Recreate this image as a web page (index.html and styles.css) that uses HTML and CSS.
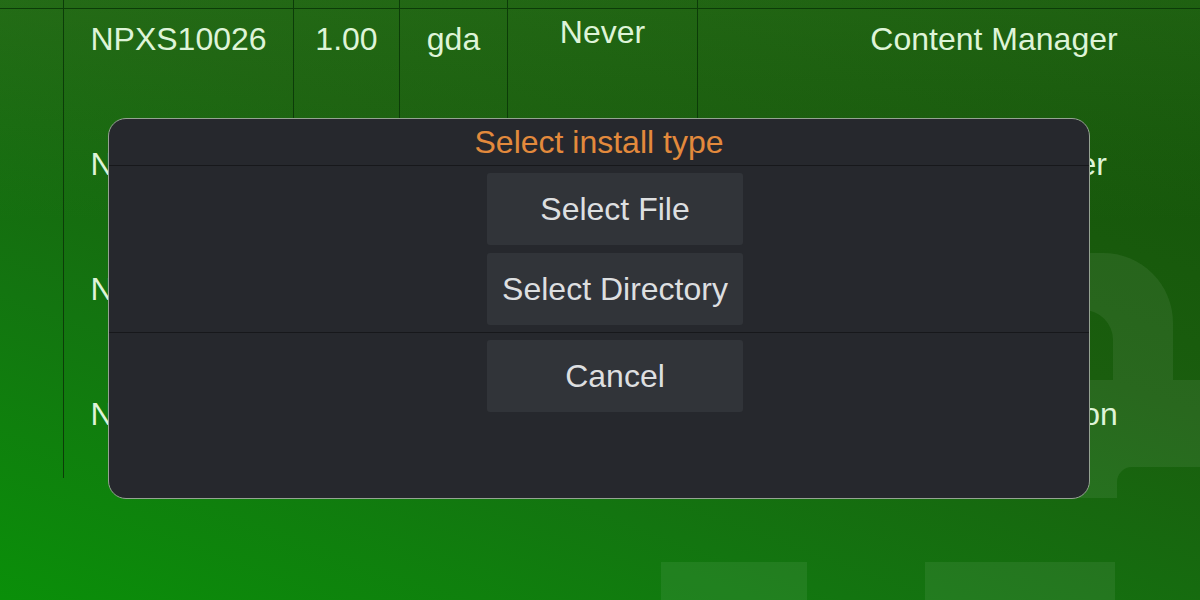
FILE: index.html
```html
<!DOCTYPE html>
<html>
<head>
<meta charset="utf-8">
<title>Select install type</title>
<link rel="stylesheet" href="styles.css">
</head>
<body>
<div class="screen">
  <svg class="bg-art" width="1200" height="600" viewBox="0 0 1200 600" aria-hidden="true">
    <path class="lock" fill-rule="evenodd" d="M1000 380 V253 H1103 A70 70 0 0 1 1173 323 V380 Z M1040 380 V310 H1083 A30 30 0 0 1 1113 340 V380 Z"/>
    <path class="lock" d="M1000 380 H1200 V467 H1132 A15 15 0 0 0 1117 482 V498 H1000 Z"/>
    <rect class="lock" x="661" y="562" width="146" height="40"/>
    <rect class="lock" x="925" y="562" width="190" height="40"/>
  </svg>

  <div class="table">
    <div class="row row-prev">
      <div class="cell"></div><div class="cell"></div><div class="cell"></div><div class="cell"></div><div class="cell"></div><div class="cell"></div>
    </div>
    <div class="row row-data">
      <div class="cell"></div>
      <div class="cell">NPXS10026</div>
      <div class="cell">1.00</div>
      <div class="cell">gda</div>
      <div class="cell cell-up">Never</div>
      <div class="cell">Content Manager</div>
    </div>
    <div class="row row-data">
      <div class="cell"></div>
      <div class="cell">NPXS10027</div>
      <div class="cell">1.00</div>
      <div class="cell">gda</div>
      <div class="cell cell-up">Never</div>
      <div class="cell">Friend Manager</div>
    </div>
    <div class="row row-data">
      <div class="cell"></div>
      <div class="cell">NPXS10028</div>
      <div class="cell">1.00</div>
      <div class="cell">gda</div>
      <div class="cell cell-up">Never</div>
      <div class="cell">Calendar</div>
    </div>
    <div class="row row-data">
      <div class="cell"></div>
      <div class="cell">NPXS10029</div>
      <div class="cell">1.00</div>
      <div class="cell">gda</div>
      <div class="cell cell-up">Never</div>
      <div class="cell">Trophy Collection</div>
    </div>
  </div>

  <div class="dialog">
    <div class="dialog-head">Select install type</div>
    <div class="dialog-body">
      <div class="btn">Select File</div>
      <div class="btn">Select Directory</div>
    </div>
    <div class="dialog-foot">
      <div class="btn">Cancel</div>
    </div>
  </div>
</div>
</body>
</html>
```

FILE: styles.css
```css
* { box-sizing: border-box; }

html, body {
  margin: 0;
  padding: 0;
}

body {
  width: 1200px;
  height: 600px;
  overflow: hidden;
  font-family: "Liberation Sans", Arial, sans-serif;
}

.screen {
  position: relative;
  width: 1200px;
  height: 600px;
  overflow: hidden;
  background:
    linear-gradient(180deg, rgba(70, 150, 50, 0.22) 0px, rgba(70, 150, 50, 0.08) 130px, rgba(70, 150, 50, 0) 220px),
    linear-gradient(200deg, #145208 0%, #1a5e0e 40%, #137510 70%, #0a8f09 100%);
}

.bg-art {
  position: absolute;
  left: 0;
  top: 0;
}

.lock {
  fill: rgba(255, 255, 255, 0.065);
}

.table {
  position: relative;
  width: 1290px;
  height: 478px;
  overflow: hidden;
}

.row {
  display: grid;
  grid-template-columns: 63px 230px 106px 108px 190px 593px;
}

.row-prev {
  height: 9px;
  border-bottom: 1px solid #0c3c08;
}

.row-data {
  height: 125px;
}

.cell {
  padding-top: 14px;
  text-align: center;
  font-size: 32px;
  line-height: 32px;
  color: #def4d8;
  white-space: nowrap;
}

.row-prev .cell {
  padding-top: 0;
}

.cell + .cell {
  border-left: 1px solid #0c3c08;
}

.cell-up {
  padding-top: 7px;
}

.dialog {
  position: absolute;
  left: 108px;
  top: 118px;
  width: 982px;
  height: 381px;
  background: #26282d;
  border: 1px solid #95a392;
  border-radius: 18px;
  overflow: hidden;
}

.dialog-head {
  height: 47px;
  border-bottom: 1px solid #17181b;
  text-align: center;
  color: #e38a3c;
  font-size: 32px;
  line-height: 46px;
}

.dialog-body {
  display: flex;
  flex-direction: column;
  align-items: center;
  gap: 8px;
  padding: 7px 0 7px 32px;
  border-bottom: 1px solid #17181b;
}

.dialog-foot {
  display: flex;
  flex-direction: column;
  align-items: center;
  padding: 7px 0 0 32px;
}

.btn {
  width: 256px;
  height: 72px;
  background: #313439;
  border-radius: 3px;
  color: #dddfe0;
  font-size: 32px;
  line-height: 72px;
  text-align: center;
  white-space: nowrap;
}
```
